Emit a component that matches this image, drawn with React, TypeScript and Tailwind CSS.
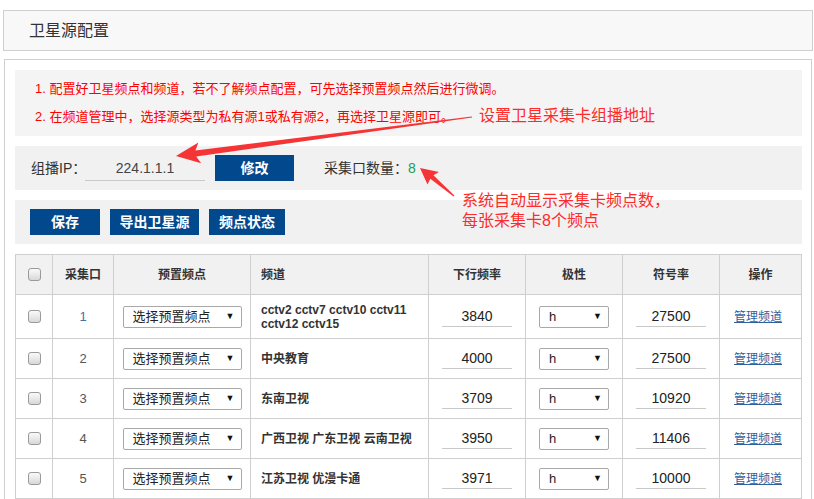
const font = "font-['Liberation_Sans','Noto_Sans_CJK_SC',sans-serif]";

type Row = { port: number; channel: string; freq: string; rate: string; h: string };

const rows: Row[] = [
  { port: 1, channel: "cctv2 cctv7 cctv10 cctv11 cctv12 cctv15", freq: "3840", rate: "27500", h: "h-[44px]" },
  { port: 2, channel: "中央教育", freq: "4000", rate: "27500", h: "h-[40px]" },
  { port: 3, channel: "东南卫视", freq: "3709", rate: "10920", h: "h-[40px]" },
  { port: 4, channel: "广西卫视 广东卫视 云南卫视", freq: "3950", rate: "11406", h: "h-[40px]" },
  { port: 5, channel: "江苏卫视 优漫卡通", freq: "3971", rate: "10000", h: "h-[40px]" },
];

function CheckBox() {
  return (
    <div className="mx-auto w-[13px] h-[13px] rounded-[3px] border border-[#9a9a9a] bg-gradient-to-b from-[#fafafa] to-[#d8d8d8]" />
  );
}

function FakeSelect({ label, width }: { label: string; width: string }) {
  return (
    <div
      className={`${width} h-[22px] mx-auto flex items-center justify-between border border-[#a9a9a9] rounded-[2px] bg-white pl-[9px] pr-[6px]`}
    >
      <span className="text-[13px] text-[#222] leading-none">{label}</span>
      <span className="text-[9px] text-[#111] leading-none">▼</span>
    </div>
  );
}

function LineInput({ value }: { value: string }) {
  return (
    <div className="mx-auto w-[70px] h-[20px] border-b border-[#c8c8c8] text-center text-[14px] leading-[18px] text-[#222]">
      {value}
    </div>
  );
}

function BlueButton({ children, width }: { children: React.ReactNode; width: string }) {
  return (
    <button
      className={`${width} h-[26px] shrink-0 bg-[#02488c] text-white text-[14px] font-bold flex items-center justify-center`}
    >
      {children}
    </button>
  );
}

export default function App() {
  return (
    <div className={`relative w-[814px] h-[499px] overflow-hidden bg-white ${font}`}>
      {/* 标题 */}
      <div className="mt-[10px] ml-[3px] mr-[1px] h-[41px] border border-[#cfcfcf] bg-[#f8f8f8] flex items-center pl-[25px] text-[16px] text-[#333]">
        卫星源配置
      </div>

      <div className="mt-[8px] ml-[4px] mr-[2px] border border-b-0 border-[#cfcfcf] pl-[10px] pr-[9px] pt-[10px] h-[450px]">
        {/* 提示 */}
        <div className="h-[66px] bg-[#f4f4f4] pl-[20px] pt-[5px] text-[13px] leading-[28px] text-[#ff0000]">
          <p>1. 配置好卫星频点和频道，若不了解频点配置，可先选择预置频点然后进行微调。</p>
          <p>2. 在频道管理中，选择源类型为私有源1或私有源2，再选择卫星源即可。</p>
        </div>

        {/* 组播IP */}
        <div className="mt-[10px] h-[44px] bg-[#f1f1f1] pl-[16px] flex items-center text-[14px] text-[#333] whitespace-nowrap">
          <span className="w-[54px] shrink-0">组播IP：</span>
          <div className="w-[120px] shrink-0 h-[24px] mt-[2px] border-b border-[#c8c8c8] text-center text-[14px] leading-[22px] text-[#444]">
            224.1.1.1
          </div>
          <div className="ml-[10px]">
            <BlueButton width="w-[79px]">修改</BlueButton>
          </div>
          <span className="ml-[30px]">
            采集口数量：<span className="text-[#23a04a]">8</span>
          </span>
        </div>

        {/* 操作按钮 */}
        <div className="mt-[10px] h-[44px] bg-[#f1f1f1] pl-[15px] flex items-center gap-[10px]">
          <BlueButton width="w-[70px]">保存</BlueButton>
          <BlueButton width="w-[89px]">导出卫星源</BlueButton>
          <BlueButton width="w-[76px]">频点状态</BlueButton>
        </div>

        {/* 表格 */}
        <table className="mt-[10px] w-[786px] table-fixed border-collapse text-[12px] text-[#333]">
          <colgroup>
            <col className="w-[37px]" />
            <col className="w-[61px]" />
            <col className="w-[137px]" />
            <col className="w-[178px]" />
            <col className="w-[97px]" />
            <col className="w-[97px]" />
            <col className="w-[97px]" />
            <col className="w-[82px]" />
          </colgroup>
          <thead>
            <tr className="h-[40px] bg-[#f1f1f1] font-bold">
              <th className="border border-[#cfcfcf]">
                <CheckBox />
              </th>
              <th className="border border-[#cfcfcf]">采集口</th>
              <th className="border border-[#cfcfcf]">预置频点</th>
              <th className="border border-[#cfcfcf] text-left pl-[10px]">频道</th>
              <th className="border border-[#cfcfcf]">下行频率</th>
              <th className="border border-[#cfcfcf]">极性</th>
              <th className="border border-[#cfcfcf]">符号率</th>
              <th className="border border-[#cfcfcf]">操作</th>
            </tr>
          </thead>
          <tbody>
            {rows.map((r) => (
              <tr key={r.port} className={r.h}>
                <td className="border border-[#cfcfcf]">
                  <CheckBox />
                </td>
                <td
                  className={`border border-[#cfcfcf] text-center text-[13px] ${
                    r.port === 1 ? "text-[#4670a8]" : "text-[#555]"
                  }`}
                >
                  {r.port}
                </td>
                <td className="border border-[#cfcfcf]">
                  <FakeSelect label="选择预置频点" width="w-[119px]" />
                </td>
                <td className="border border-[#cfcfcf] pl-[10px] pr-[6px] font-bold leading-[14px]">
                  {r.channel}
                </td>
                <td className="border border-[#cfcfcf]">
                  <LineInput value={r.freq} />
                </td>
                <td className="border border-[#cfcfcf]">
                  <FakeSelect label="h" width="w-[70px]" />
                </td>
                <td className="border border-[#cfcfcf]">
                  <LineInput value={r.rate} />
                </td>
                <td className="border border-[#cfcfcf] text-center pr-[5px]">
                  <a className="text-[12px] text-[#2f5f9c] underline">管理频道</a>
                </td>
              </tr>
            ))}
          </tbody>
        </table>
      </div>

      {/* 标注箭头 */}
      <svg className="absolute left-0 top-0 pointer-events-none" width="814" height="499">
        <polygon
          fill="#f53535"
          points="176,156 201.2,163.3 196.2,156.4 472.1,117.5 471.9,116.5 195.4,150.4 198.4,142.5"
        />
        <polygon
          fill="#f53535"
          points="420,168 427.5,184.5 430.3,178.8 453.6,196.5 454.4,195.5 433.4,175.2 439,172"
        />
      </svg>

      {/* 标注文字 */}
      <div className="absolute left-[479px] top-[106px] text-[16px] leading-[20px] text-[#ff2a2a]">
        设置卫星采集卡组播地址
      </div>
      <div className="absolute left-[462px] top-[191px] text-[16px] leading-[20px] text-[#ff2a2a]">
        <p>系统自动显示采集卡频点数，</p>
        <p>每张采集卡8个频点</p>
      </div>
    </div>
  );
}
